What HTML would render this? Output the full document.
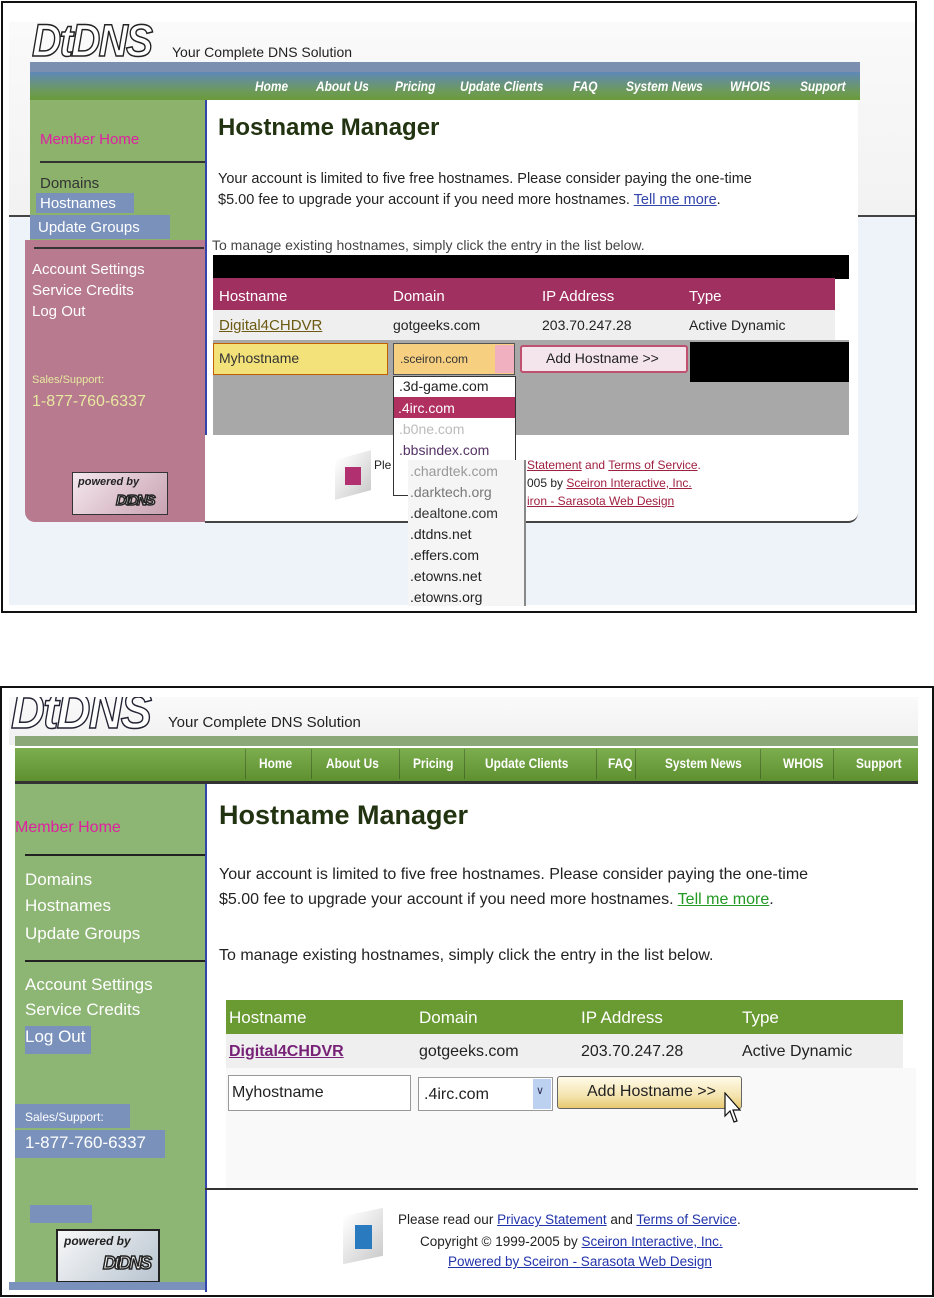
<!DOCTYPE html>
<html><head><meta charset="utf-8">
<style>
*{margin:0;padding:0;box-sizing:border-box}
body{width:934px;height:1298px;background:#fff;position:relative;overflow:hidden;font-family:"Liberation Sans",sans-serif}
.a{position:absolute}
.t{position:absolute;white-space:nowrap;font-family:"Liberation Sans",sans-serif}
.logo{font-family:"Liberation Sans",sans-serif;font-style:italic;font-weight:bold;color:#fff;-webkit-text-stroke:1.5px #222;letter-spacing:-2px}
.nav span{position:absolute;top:0;font-weight:bold;font-size:14px;color:#fff;transform:scaleX(.85);transform-origin:left}
.sep{position:absolute;width:1px;background:rgba(0,0,0,.25)}
u{text-decoration:underline}
</style></head><body>

<!-- ============ TOP PANEL ============ -->
<div class="a" style="left:1px;top:1px;width:916px;height:612px;border:2px solid #111;background:#fff"></div>
<div class="a" style="left:9px;top:22px;width:906px;height:194px;background:linear-gradient(#fafafa,#f2f2f2)"></div>
<div class="a" style="left:9px;top:216px;width:906px;height:389px;background:#eef3fa"></div>
<div class="a" style="left:9px;top:215px;width:906px;height:2px;background:#444"></div>
<div class="t logo" style="left:32px;top:15px;font-size:45px;transform:scaleX(.9);transform-origin:left">DtDNS</div>
<div class="t" style="left:172px;top:44px;font-size:14px;color:#222">Your Complete DNS Solution</div>
<!-- nav -->
<div class="a" style="left:30px;top:62px;width:830px;height:10px;background:#7b8fb0"></div>
<div class="a" style="left:30px;top:72px;width:830px;height:28px;background:linear-gradient(#5f88b8,#6d9a58 70%,#6a9a3a)"></div>
<div class="a nav" style="left:30px;top:78px;width:830px;height:20px;font-style:italic">
<span style="left:225px;font-style:italic">Home</span>
<span style="left:286px;font-style:italic">About Us</span>
<span style="left:365px;font-style:italic">Pricing</span>
<span style="left:430px;font-style:italic">Update Clients</span>
<span style="left:543px;font-style:italic">FAQ</span>
<span style="left:596px;font-style:italic">System News</span>
<span style="left:700px;font-style:italic">WHOIS</span>
<span style="left:770px;font-style:italic">Support</span>
</div>
<!-- sidebar -->
<div class="a" style="left:30px;top:100px;width:175px;height:140px;background:#8cb26c"></div>
<div class="a" style="left:25px;top:240px;width:185px;height:282px;background:#b77a8e;border-radius:0 0 0 10px"></div>
<div class="t" style="left:40px;top:131px;font-size:15px;color:#e020a0">Member Home</div>
<div class="a" style="left:40px;top:161px;width:165px;height:2px;background:#333"></div>
<div class="t" style="left:40px;top:175px;font-size:15px;color:#333">Domains</div>
<div class="a" style="left:36px;top:193px;width:98px;height:20px;background:#7a92bb"></div>
<div class="t" style="left:40px;top:195px;font-size:15px;color:#fff">Hostnames</div>
<div class="a" style="left:30px;top:215px;width:140px;height:24px;background:#7a92bb"></div>
<div class="t" style="left:38px;top:219px;font-size:15px;color:#fff">Update Groups</div>
<div class="a" style="left:34px;top:247px;width:170px;height:2px;background:#333"></div>
<div class="t" style="left:32px;top:261px;font-size:15px;color:#fff">Account Settings</div>
<div class="t" style="left:32px;top:282px;font-size:15px;color:#fff">Service Credits</div>
<div class="t" style="left:32px;top:303px;font-size:15px;color:#fff">Log Out</div>
<div class="t" style="left:32px;top:374px;font-size:11px;color:#e8e8a0">Sales/Support:</div>
<div class="t" style="left:32px;top:393px;font-size:16px;color:#e8e8a0">1-877-760-6337</div>
<div class="a" style="left:72px;top:472px;width:96px;height:43px;background:linear-gradient(135deg,#f4e8ee,#c9a2b2);border:1px solid #333"></div>
<div class="t" style="left:78px;top:476px;font-size:11px;font-style:italic;font-weight:bold;color:#222">powered by</div>
<div class="t logo" style="left:116px;top:492px;font-size:15px">DtDNS</div>
<!-- content -->
<div class="a" style="left:205px;top:100px;width:653px;height:335px;background:#fff;border-left:2px solid #3344aa"></div>
<div class="a" style="left:205px;top:435px;width:653px;height:88px;background:#fff;border-bottom:2px solid #444;border-radius:0 0 10px 0"></div>
<div class="t" style="left:218px;top:114px;font-size:24px;font-weight:bold;color:#223311">Hostname Manager</div>
<div class="t" style="left:218px;top:171px;font-size:14.5px;color:#222">Your account is limited to five free hostnames. Please consider paying the one-time</div>
<div class="t" style="left:218px;top:192px;font-size:14.5px;color:#222">$5.00 fee to upgrade your account if you need more hostnames. <u style="color:#3344aa">Tell me more</u>.</div>
<div class="t" style="left:212px;top:237px;font-size:14px;color:#444">To manage existing hostnames, simply click the entry in the list below.</div>
<div class="a" style="left:213px;top:255px;width:636px;height:24px;background:#000"></div>
<div class="a" style="left:213px;top:278px;width:622px;height:32px;background:#a03060"></div>
<div class="t" style="left:219px;top:288px;font-size:15px;color:#fff">Hostname</div>
<div class="t" style="left:393px;top:288px;font-size:15px;color:#fff">Domain</div>
<div class="t" style="left:542px;top:288px;font-size:15px;color:#fff">IP Address</div>
<div class="t" style="left:689px;top:288px;font-size:15px;color:#fff">Type</div>
<div class="a" style="left:213px;top:310px;width:622px;height:30px;background:#efefef"></div>
<div class="t" style="left:219px;top:317px;font-size:15px;color:#6b5a10"><u>Digital4CHDVR</u></div>
<div class="t" style="left:393px;top:317px;font-size:14px;color:#222">gotgeeks.com</div>
<div class="t" style="left:542px;top:317px;font-size:14px;color:#222">203.70.247.28</div>
<div class="t" style="left:689px;top:317px;font-size:14px;color:#222">Active Dynamic</div>
<div class="a" style="left:213px;top:340px;width:636px;height:95px;background:#a8a8a8"></div>
<div class="a" style="left:690px;top:342px;width:159px;height:40px;background:#000"></div>
<div class="a" style="left:213px;top:343px;width:175px;height:32px;background:#f3e27a;border:1px solid #c06000"></div>
<div class="t" style="left:219px;top:350px;font-size:14px;color:#333">Myhostname</div>
<div class="a" style="left:393px;top:343px;width:122px;height:32px;background:#f6d080;border:1px solid #555"></div>
<div class="a" style="left:495px;top:345px;width:19px;height:28px;background:#f0b0c0"></div>
<div class="t" style="left:400px;top:352px;font-size:12px;color:#333">.sceiron.com</div>
<div class="a" style="left:520px;top:345px;width:168px;height:28px;background:#f4e4ec;border:2px solid #c05070;border-radius:3px"></div>
<div class="t" style="left:546px;top:350px;font-size:14px;color:#222">Add Hostname &gt;&gt;</div>
<!-- dropdown list -->
<div class="a" style="left:393px;top:376px;width:123px;height:120px;background:#fff;border:1px solid #333"></div>
<div class="a" style="left:408px;top:460px;width:118px;height:146px;background:#f5f5f5;border-right:2px solid #888"></div>
<div class="t" style="left:399px;top:378px;font-size:14px;color:#222">.3d-game.com</div>
<div class="a" style="left:394px;top:397px;width:121px;height:21px;background:#b03060"></div>
<div class="t" style="left:398px;top:400px;font-size:14px;color:#fff">.4irc.com</div>
<div class="t" style="left:399px;top:421px;font-size:14px;color:#bbb">.b0ne.com</div>
<div class="t" style="left:399px;top:442px;font-size:14px;color:#553366">.bbsindex.com</div>
<div class="t" style="left:410px;top:463px;font-size:14px;color:#999">.chardtek.com</div>
<div class="t" style="left:410px;top:484px;font-size:14px;color:#777">.darktech.org</div>
<div class="t" style="left:410px;top:505px;font-size:14px;color:#333">.dealtone.com</div>
<div class="t" style="left:410px;top:526px;font-size:14px;color:#222">.dtdns.net</div>
<div class="t" style="left:410px;top:547px;font-size:14px;color:#222">.effers.com</div>
<div class="t" style="left:410px;top:568px;font-size:14px;color:#222">.etowns.net</div>
<div class="t" style="left:410px;top:589px;font-size:14px;color:#222">.etowns.org</div>
<!-- footer -->
<div class="a" style="left:335px;top:455px;width:36px;height:40px;background:linear-gradient(135deg,#fff,#ccc);transform:skewY(-15deg)"></div>
<div class="a" style="left:345px;top:467px;width:16px;height:18px;background:#b03070"></div>
<div class="t" style="left:374px;top:458px;font-size:12px;color:#222">Ple</div>
<div class="t" style="left:527px;top:458px;font-size:12px;color:#a02040"><u>Statement</u> and <u>Terms of Service</u>.</div>
<div class="t" style="left:527px;top:476px;font-size:12px;color:#222">005 by <u style="color:#a02040">Sceiron Interactive, Inc.</u></div>
<div class="t" style="left:527px;top:494px;font-size:12px;color:#a02040"><u>iron - Sarasota Web Design</u></div>

<!-- ============ BOTTOM PANEL ============ -->
<div class="a" style="left:0;top:686px;width:934px;height:611px;border:2px solid #111;background:#fff"></div>
<div class="a" style="left:9px;top:697px;width:909px;height:48px;background:linear-gradient(#fafafa,#f0f0f0)"></div>
<div class="a" style="left:9px;top:697px;width:160px;height:40px;overflow:hidden">
<div class="t logo" style="left:2px;top:-16px;font-size:52px;-webkit-text-stroke:1.5px #223;transform:scaleX(.9);transform-origin:left">DtDNS</div>
</div>
<div class="t" style="left:168px;top:714px;font-size:15px;color:#222">Your Complete DNS Solution</div>
<div class="a" style="left:15px;top:736px;width:903px;height:10px;background:#8aa878"></div>
<div class="a" style="left:15px;top:746px;width:903px;height:2px;background:#fff"></div>
<div class="a" style="left:15px;top:748px;width:903px;height:33px;background:linear-gradient(#7cad4e,#5e9030)"></div>
<div class="a" style="left:15px;top:781px;width:903px;height:3px;background:#333"></div>
<div class="a nav" style="left:15px;top:755px;width:903px;height:20px">
<span style="left:244px">Home</span>
<span style="left:311px">About Us</span>
<span style="left:398px">Pricing</span>
<span style="left:470px">Update Clients</span>
<span style="left:593px">FAQ</span>
<span style="left:650px">System News</span>
<span style="left:768px">WHOIS</span>
<span style="left:841px">Support</span>
<div class="sep" style="left:230px;top:-6px;height:30px"></div>
<div class="sep" style="left:296px;top:-6px;height:30px"></div>
<div class="sep" style="left:384px;top:-6px;height:30px"></div>
<div class="sep" style="left:449px;top:-6px;height:30px"></div>
<div class="sep" style="left:581px;top:-6px;height:30px"></div>
<div class="sep" style="left:620px;top:-6px;height:30px"></div>
<div class="sep" style="left:745px;top:-6px;height:30px"></div>
<div class="sep" style="left:818px;top:-6px;height:30px"></div>
</div>
<!-- sidebar -->
<div class="a" style="left:15px;top:784px;width:190px;height:506px;background:#8db573"></div>
<div class="t" style="left:15px;top:819px;font-size:16px;color:#e020a0">Member Home</div>
<div class="a" style="left:25px;top:854px;width:180px;height:2px;background:#222"></div>
<div class="t" style="left:25px;top:870px;font-size:17px;color:#fff">Domains</div>
<div class="t" style="left:25px;top:896px;font-size:17px;color:#fff">Hostnames</div>
<div class="t" style="left:25px;top:924px;font-size:17px;color:#fff">Update Groups</div>
<div class="a" style="left:25px;top:960px;width:180px;height:2px;background:#222"></div>
<div class="t" style="left:25px;top:975px;font-size:17px;color:#fff">Account Settings</div>
<div class="t" style="left:25px;top:1000px;font-size:17px;color:#fff">Service Credits</div>
<div class="a" style="left:25px;top:1026px;width:66px;height:28px;background:#7a92bb"></div>
<div class="t" style="left:25px;top:1027px;font-size:17px;color:#fff">Log Out</div>
<div class="a" style="left:15px;top:1104px;width:115px;height:24px;background:#7a92bb"></div>
<div class="t" style="left:25px;top:1110px;font-size:12px;color:#fff">Sales/Support:</div>
<div class="a" style="left:15px;top:1130px;width:150px;height:28px;background:#7a92bb"></div>
<div class="t" style="left:25px;top:1133px;font-size:17px;color:#fff">1-877-760-6337</div>
<div class="a" style="left:30px;top:1205px;width:62px;height:18px;background:#7a92bb"></div>
<div class="a" style="left:56px;top:1229px;width:104px;height:54px;background:linear-gradient(135deg,#f8f8f8,#b8c4d0);border:2px solid #222"></div>
<div class="t" style="left:64px;top:1234px;font-size:12px;font-style:italic;font-weight:bold;color:#222">powered by</div>
<div class="t logo" style="left:103px;top:1253px;font-size:18px">DtDNS</div>
<div class="a" style="left:9px;top:1282px;width:196px;height:8px;background:#7a92bb"></div>
<!-- content -->
<div class="a" style="left:205px;top:784px;width:713px;height:404px;background:#fff;border-left:2px solid #3344aa"></div>
<div class="t" style="left:219px;top:800px;font-size:27px;font-weight:bold;color:#223311">Hostname Manager</div>
<div class="t" style="left:219px;top:866px;font-size:16px;color:#222">Your account is limited to five free hostnames. Please consider paying the one-time</div>
<div class="t" style="left:219px;top:891px;font-size:16px;color:#222">$5.00 fee to upgrade your account if you need more hostnames. <u style="color:#229922">Tell me more</u>.</div>
<div class="t" style="left:219px;top:947px;font-size:16px;color:#222">To manage existing hostnames, simply click the entry in the list below.</div>
<div class="a" style="left:226px;top:1000px;width:677px;height:34px;background:#6a9a32"></div>
<div class="t" style="left:229px;top:1008px;font-size:17px;color:#fff">Hostname</div>
<div class="t" style="left:419px;top:1008px;font-size:17px;color:#fff">Domain</div>
<div class="t" style="left:581px;top:1008px;font-size:17px;color:#fff">IP Address</div>
<div class="t" style="left:742px;top:1008px;font-size:17px;color:#fff">Type</div>
<div class="a" style="left:226px;top:1034px;width:677px;height:34px;background:#efefef"></div>
<div class="t" style="left:229px;top:1043px;font-size:16px;font-weight:bold;color:#772277"><u>Digital4CHDVR</u></div>
<div class="t" style="left:419px;top:1043px;font-size:16px;color:#222">gotgeeks.com</div>
<div class="t" style="left:581px;top:1043px;font-size:16px;color:#222">203.70.247.28</div>
<div class="t" style="left:742px;top:1043px;font-size:16px;color:#222">Active Dynamic</div>
<div class="a" style="left:226px;top:1068px;width:690px;height:120px;background:#f9f9f9"></div>
<div class="a" style="left:228px;top:1075px;width:183px;height:36px;background:#fff;border:1px solid #999"></div>
<div class="t" style="left:232px;top:1084px;font-size:16px;color:#222">Myhostname</div>
<div class="a" style="left:418px;top:1077px;width:135px;height:34px;background:#fff;border:1px solid #999"></div>
<div class="a" style="left:533px;top:1079px;width:18px;height:30px;background:#bcd0ef"></div>
<div class="t" style="left:536px;top:1084px;font-size:11px;color:#335">&#8744;</div>
<div class="t" style="left:424px;top:1086px;font-size:16px;color:#222">.4irc.com</div>
<div class="a" style="left:557px;top:1076px;width:185px;height:33px;background:linear-gradient(#fffbe8,#f4e4b0 60%,#e8c870);border:1px solid #666;border-radius:3px"></div>
<div class="t" style="left:587px;top:1083px;font-size:16px;color:#222">Add Hostname &gt;&gt;</div>
<svg class="a" style="left:724px;top:1092px" width="18" height="36" viewBox="0 0 18 36"><path d="M1 1 L1 24 L6 19 L10 30 L13 29 L9 18 L16 18 Z" fill="#fff" stroke="#111" stroke-width="1.2"/></svg>
<div class="a" style="left:205px;top:1188px;width:713px;height:2px;background:#333"></div>
<div class="a" style="left:205px;top:1190px;width:713px;height:102px;background:#fff;border-left:2px solid #3344aa"></div>
<!-- footer -->
<div class="a" style="left:343px;top:1212px;width:40px;height:48px;background:linear-gradient(135deg,#fff,#ccc);transform:skewY(-12deg)"></div>
<div class="a" style="left:355px;top:1225px;width:17px;height:24px;background:#2a7ac0"></div>
<div class="t" style="left:398px;top:1212px;font-size:13.5px;color:#222">Please read our <u style="color:#2233aa">Privacy Statement</u> and <u style="color:#2233aa">Terms of Service</u>.</div>
<div class="t" style="left:420px;top:1234px;font-size:13.5px;color:#222">Copyright © 1999-2005 by <u style="color:#2233aa">Sceiron Interactive, Inc.</u></div>
<div class="t" style="left:448px;top:1254px;font-size:13.5px;color:#2233aa"><u>Powered by Sceiron - Sarasota Web Design</u></div>
</body></html>
